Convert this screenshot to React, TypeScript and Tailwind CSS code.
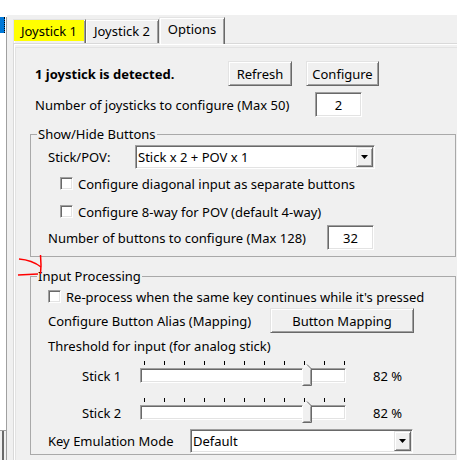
import React from "react";

const sunken =
  "border border-t-[#a0a0a0] border-l-[#a0a0a0] border-b-white border-r-white shadow-[inset_1px_1px_0_#696969,inset_-1px_-1px_0_#e3e3e3]";
const raised =
  "border border-t-[#e3e3e3] border-l-[#e3e3e3] border-b-[#696969] border-r-[#696969] shadow-[inset_1px_1px_0_#ffffff,inset_-1px_-1px_0_#a0a0a0]";

function Check() {
  return <span className={"block h-[13px] w-[13px] shrink-0 bg-white " + sunken} />;
}

function Button({ className, children }: { className: string; children: React.ReactNode }) {
  return (
    <div className={"flex h-[25px] shrink-0 items-center justify-center bg-[#f0f0f0] " + raised + " " + className}>
      {children}
    </div>
  );
}

function TextBox({ className, value }: { className: string; value: string }) {
  return (
    <div className={"flex h-[25px] shrink-0 items-center justify-center bg-white " + sunken + " " + className}>
      {value}
    </div>
  );
}

function Select({ className, value }: { className: string; value: string }) {
  return (
    <div className={"flex h-[24px] shrink-0 items-stretch bg-white py-[1px] pl-[2px] pr-[1px] " + sunken + " " + className}>
      <span className="flex flex-1 items-center">{value}</span>
      <span className={"flex w-[17px] items-center justify-center bg-[#f0f0f0] " + raised}>
        <svg width="7" height="4" viewBox="0 0 7 4">
          <path d="M0 0H7L3.5 4Z" fill="#000" />
        </svg>
      </span>
    </div>
  );
}

function Slider({ label, className }: { label: string; className: string }) {
  const ticks = [0, 1, 2, 3, 4, 5, 6, 7, 8, 9, 10];
  return (
    <div className={"flex h-[22px] items-end " + className}>
      <span className="ml-[51px] flex h-[15px] w-[58px] items-center">{label}</span>
      <div className="relative flex h-[22px] w-[206px] flex-col">
        <div className="relative h-[4px]">
          {ticks.map((t) => (
            <span
              key={t}
              className="absolute top-0 h-[4px] w-[1px] bg-black"
              style={{ left: 4 + t * 20 }}
            />
          ))}
        </div>
        <div className={"mt-[3px] h-[15px] bg-white " + sunken} />
        <svg className="absolute left-[162px] top-[3px]" width="10" height="22" viewBox="0 0 10 22">
          <path d="M0.5 5L5 0.5L9.5 5V21.5H0.5Z" fill="#f0f0f0" />
          <path d="M0.5 21V5L5 0.5" stroke="#ffffff" fill="none" />
          <path d="M5 0.5L9.5 5V21.5H0.5" stroke="#696969" fill="none" />
          <path d="M8.5 5.5V20.5H1.5" stroke="#a0a0a0" fill="none" />
        </svg>
      </div>
      <span className="ml-[27px] flex h-[15px] items-center">82 %</span>
    </div>
  );
}

export default function App() {
  return (
    <div className="relative flex h-[460px] w-[457px] overflow-hidden bg-[#f0f0f0] font-['Noto_Sans',sans-serif] text-[13px] leading-[16px] text-black">
      {/* left strip */}
      <div className="flex w-[7px] shrink-0 flex-col">
        <div className="h-[17px] bg-white" />
        <div className="flex h-[413px] flex-col border-r border-[#a0a0a0] bg-white">
          <div className="h-[16px] w-[5px] border-r border-dotted border-black bg-[#0078d7]" />
        </div>
        <div className="flex flex-1 border-r border-t border-[#a0a0a0]">
          <div className="w-[4px] border-r-2 border-[#696969]" />
        </div>
      </div>

      {/* main */}
      <div className="flex flex-1 flex-col">
        <div className="h-[15px] bg-white" />
        <div className="ml-[6px] flex flex-1 flex-col">
          {/* tabs */}
          <div className="flex h-[28px] items-end">
            <div className="flex h-[24px] w-[73px] items-start border-l border-r border-t border-l-[#e3e3e3] border-r-[#696969] border-t-[#e3e3e3] shadow-[inset_1px_1px_0_#ffffff,inset_-1px_0_0_#a0a0a0]">
              <span className="flex h-[21px] w-[70px] items-center justify-center bg-[#ffff00]">Joystick 1</span>
            </div>
            <div className="flex h-[24px] w-[73px] items-center justify-center border-r border-t border-r-[#696969] border-t-[#e3e3e3] pb-[2px] shadow-[inset_1px_1px_0_#ffffff,inset_-1px_0_0_#a0a0a0]">
              Joystick 2
            </div>
            <div className="relative z-10 -mb-[1px] flex h-[27px] w-[66px] items-center justify-center border-l border-r border-t border-l-[#e3e3e3] border-r-[#696969] border-t-[#e3e3e3] bg-[#f0f0f0] pb-[4px] shadow-[inset_1px_1px_0_#ffffff,inset_-1px_0_0_#a0a0a0]">
              Options
            </div>
          </div>

          {/* panel */}
          <div className="flex flex-1 flex-col border-l border-t border-[#d9d9d9] shadow-[inset_1px_1px_0_#ffffff]">
            <div className="ml-[1px] mt-[3px] flex flex-1 flex-col border-l border-t border-[#e3e3e3]">
              {/* row 1 */}
              <div className="mt-[13px] flex h-[25px] items-center">
                <span className="ml-[19px] w-[193px] font-bold">1 joystick is detected.</span>
                <Button className="w-[64px]">Refresh</Button>
                <Button className="ml-[14px] w-[73px]">Configure</Button>
              </div>
              {/* row 2 */}
              <div className="mt-[6px] flex h-[25px] items-center">
                <span className="ml-[19px] w-[280px]">Number of joysticks to configure (Max 50)</span>
                <TextBox className="w-[47px]" value="2" />
              </div>

              {/* group 1 */}
              <fieldset className="ml-[14px] mt-[9px] flex w-[426px] flex-col border border-[#a9a9a9] pb-[6px]">
                <legend className="ml-[6px] px-[1px] leading-[16px]">Show/Hide Buttons</legend>
                <div className="mt-[3px] flex h-[24px] items-center">
                  <span className="ml-[17px] w-[87px]">Stick/POV:</span>
                  <Select className="w-[240px]" value="Stick x 2 + POV x 1" />
                </div>
                <div className="mt-[7px] flex h-[15px] items-center">
                  <span className="ml-[29px]"><Check /></span>
                  <span className="ml-[5px]">Configure diagonal input as separate buttons</span>
                </div>
                <div className="mt-[13px] flex h-[15px] items-center">
                  <span className="ml-[29px]"><Check /></span>
                  <span className="ml-[5px]">Configure 8-way for POV (default 4-way)</span>
                </div>
                <div className="mt-[6px] flex h-[25px] items-center">
                  <span className="ml-[17px] w-[279px]">Number of buttons to configure (Max 128)</span>
                  <TextBox className="w-[47px]" value="32" />
                </div>
              </fieldset>

              {/* group 2 */}
              <fieldset className="ml-[14px] mt-[11px] flex w-[426px] flex-col border border-[#a9a9a9] pb-[1px]">
                <legend className="ml-[6px] px-[1px] leading-[16px]">Input Processing</legend>
                <div className="mt-[5px] flex h-[15px] items-center">
                  <span className="ml-[17px]"><Check /></span>
                  <span className="ml-[5px]">Re-process when the same key continues while it's pressed</span>
                </div>
                <div className="mt-[4px] flex h-[25px] items-center">
                  <span className="ml-[17px] w-[222px]">Configure Button Alias (Mapping)</span>
                  <Button className="w-[144px]">Button Mapping</Button>
                </div>
                <div className="mt-[5px] flex h-[16px] items-center">
                  <span className="ml-[17px]">Threshold for input (for analog stick)</span>
                </div>
                <Slider label="Stick 1" className="mt-[7px]" />
                <Slider label="Stick 2" className="mt-[15px]" />
                <div className="mt-[9px] flex h-[24px] items-center">
                  <span className="ml-[17px] w-[142px]">Key Emulation Mode</span>
                  <Select className="w-[223px]" value="Default" />
                </div>
              </fieldset>
            </div>
          </div>
        </div>
      </div>

      {/* red annotation */}
      <svg className="pointer-events-none absolute left-0 top-[250px]" width="50" height="30" viewBox="0 0 50 30">
        <path d="M19 9Q32 10 41 17" stroke="#ff0000" strokeWidth="1.5" fill="none" />
        <path d="M40.5 5Q41.5 15 40.5 24" stroke="#ff0000" strokeWidth="1.5" fill="none" />
        <path d="M18 25Q28 24.5 38 24" stroke="#ff0000" strokeWidth="1.5" fill="none" />
      </svg>
    </div>
  );
}
